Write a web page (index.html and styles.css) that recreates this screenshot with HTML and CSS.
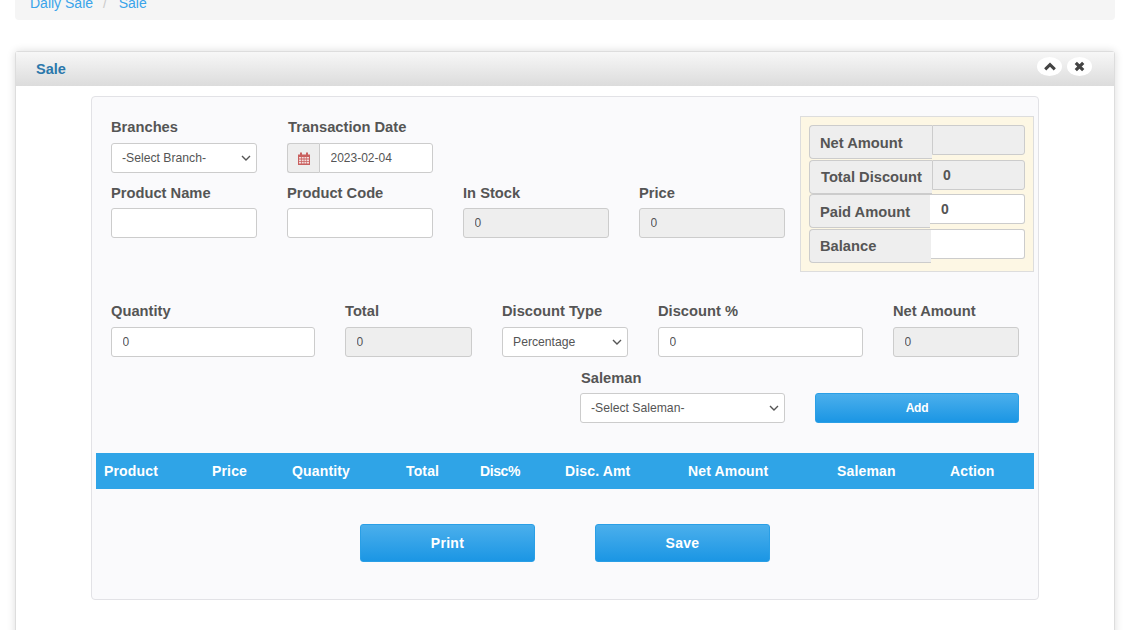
FILE: index.html
```html
<!DOCTYPE html>
<html lang="en">
<head>
    <meta charset="UTF-8">
    <meta name="viewport" content="width=device-width, initial-scale=1.0">
    <title>Sale</title>
    <link rel="stylesheet" href="styles.css">
</head>
<body>
    <div class="breadcrumb">
        <a href="#">Daily Sale</a>
        <span class="crumb-sep">/</span>
        <a href="#">Sale</a>
    </div>

    <div class="panel">
        <div class="panel-head">
            <h3>Sale</h3>
            <div class="panel-tools">
                <span class="tool-btn">
                    <svg width="12" height="9" viewBox="0 0 12 9"><path d="M1.2 7.4 6 2.6l4.8 4.8" fill="none" stroke="#444" stroke-width="3"/></svg>
                </span>
                <span class="tool-btn">
                    <svg width="11" height="11" viewBox="0 0 11 11"><path d="M1.8 1.8l7.4 7.4M9.2 1.8 1.8 9.2" fill="none" stroke="#444" stroke-width="3.2"/></svg>
                </span>
            </div>
        </div>

        <div class="panel-body">
            <div class="sale-box">
                <div class="top-block">
                    <div class="top-fields">
                        <div class="row row-first">
                            <div class="field w146">
                                <label>Branches</label>
                                <select class="control"><option>-Select Branch-</option></select>
                            </div>
                            <div class="field w146">
                                <label class="label-date">Transaction Date</label>
                                <div class="date-group">
                                    <span class="date-addon">
                                        <svg width="12" height="13" viewBox="0 0 12 13">
                                            <path d="M0 2.5h12V13H0z" fill="#c9605f"/>
                                            <path d="M2 0.5h2v3H2zM8 0.5h2v3H8z" fill="#c9605f"/>
                                            <path d="M1 5h2v1.6H1zM3.7 5h2v1.6h-2zM6.4 5h2v1.6h-2zM9 5h2v1.6H9zM1 7.4h2V9H1zM3.7 7.4h2V9h-2zM6.4 7.4h2V9h-2zM9 7.4h2V9H9zM1 9.8h2v1.6H1zM3.7 9.8h2v1.6h-2zM6.4 9.8h2v1.6h-2zM9 9.8h2v1.6H9z" fill="#f3dddd"/>
                                        </svg>
                                    </span>
                                    <input class="control date-input" type="text" value="2023-02-04">
                                </div>
                            </div>
                        </div>
                        <div class="row">
                            <div class="field w146">
                                <label>Product Name</label>
                                <input class="control" type="text">
                            </div>
                            <div class="field w146">
                                <label>Product Code</label>
                                <input class="control" type="text">
                            </div>
                            <div class="field w146">
                                <label>In Stock</label>
                                <input class="control" type="text" value="0" readonly>
                            </div>
                            <div class="field w146">
                                <label>Price</label>
                                <input class="control" type="text" value="0" readonly>
                            </div>
                        </div>
                    </div>

                    <div class="amount-box">
                        <div class="amount-row">
                            <span class="amount-label w123">Net Amount</span>
                            <input class="amount-input" type="text" readonly>
                        </div>
                        <div class="amount-row">
                            <span class="amount-label w123 label-discount">Total Discount</span>
                            <input class="amount-input" type="text" value="0" readonly>
                        </div>
                        <div class="amount-row">
                            <span class="amount-label w121">Paid Amount</span>
                            <input class="amount-input" type="text" value="0">
                        </div>
                        <div class="amount-row">
                            <span class="amount-label w122">Balance</span>
                            <input class="amount-input" type="text">
                        </div>
                    </div>
                </div>

                <div class="row row-qty">
                    <div class="field w204">
                        <label>Quantity</label>
                        <input class="control" type="text" value="0">
                    </div>
                    <div class="field w127">
                        <label>Total</label>
                        <input class="control" type="text" value="0" readonly>
                    </div>
                    <div class="field w126">
                        <label>Discount Type</label>
                        <select class="control"><option>Percentage</option></select>
                    </div>
                    <div class="field w205">
                        <label>Discount %</label>
                        <input class="control" type="text" value="0">
                    </div>
                    <div class="field w126">
                        <label>Net Amount</label>
                        <input class="control" type="text" value="0" readonly>
                    </div>
                </div>

                <div class="row row-add">
                    <div class="field w205">
                        <label class="label-saleman">Saleman</label>
                        <select class="control"><option>-Select Saleman-</option></select>
                    </div>
                    <button class="btn btn-add" type="button">Add</button>
                </div>

                <table class="items">
                    <thead>
                        <tr>
                            <th class="c-product">Product</th>
                            <th class="c-price">Price</th>
                            <th class="c-qty">Quantity</th>
                            <th class="c-total">Total</th>
                            <th class="c-disc">Disc%</th>
                            <th class="c-amt">Disc. Amt</th>
                            <th class="c-net">Net Amount</th>
                            <th class="c-sale">Saleman</th>
                            <th class="c-action">Action</th>
                        </tr>
                    </thead>
                </table>

                <div class="actions">
                    <button class="btn btn-large" type="button">Print</button>
                    <button class="btn btn-large" type="button">Save</button>
                </div>
            </div>
        </div>
    </div>
</body>
</html>
```

FILE: styles.css
```css
html, body {
    height: 630px;
    overflow: hidden;
}
body {
    font-family: "Liberation Sans", Arial, sans-serif;
    font-size: 14px;
    margin: 0;
    padding: 0 11px 0 15px;
    background-color: #fff;
    color: #555;
}
* {
    box-sizing: border-box;
}

.breadcrumb {
    height: 40px;
    margin-top: -20px;
    padding: 13px 15px 0;
    line-height: 20px;
    background-color: #f5f5f5;
    border-radius: 4px;
}
.breadcrumb a {
    color: #3aa4ea;
    text-decoration: none;
}
.crumb-sep {
    color: #ccc;
    padding: 0 8px 0 6px;
}

.panel {
    margin-top: 31px;
    height: 590px;
    background-color: #fff;
    border: 1px solid #ddd;
    border-radius: 3px;
    box-shadow: 0 0 8px rgba(0, 0, 0, 0.14);
}
.panel-head {
    display: flex;
    justify-content: space-between;
    height: 34px;
    padding: 5px 22px 0 20px;
    background: linear-gradient(to bottom, #f7f7f7, #dcdcdc);
}
.panel-head h3 {
    margin: 0;
    font-size: 14.5px;
    line-height: 24px;
    font-weight: bold;
    color: #2b78ab;
}
.panel-tools {
    display: flex;
    gap: 5px;
}
.tool-btn {
    display: flex;
    align-items: center;
    justify-content: center;
    width: 25px;
    height: 19px;
    background-color: #fff;
    border-radius: 50%;
}
.panel-body {
    padding: 10px 75px 0;
}

.sale-box {
    height: 504px;
    padding: 19px 19px 0;
    background-color: #fafafc;
    border: 1px solid #e2e2e6;
    border-radius: 4px;
}

.top-block {
    display: flex;
    justify-content: space-between;
    height: 156px;
    margin-right: -15px;
}
.row {
    display: flex;
    gap: 30px;
}
.row-first {
    padding-top: 1px;
    margin-bottom: 10px;
}
.row-qty {
    margin-top: 29px;
}
.row-add {
    justify-content: flex-end;
    align-items: flex-end;
    margin-top: 11px;
}

.field label {
    display: block;
    height: 20px;
    margin-bottom: 5px;
    line-height: 20px;
    font-size: 14.7px;
    font-weight: bold;
    color: #555;
}
.row-first .field label,
.row-qty .field label {
    margin-bottom: 6px;
}
.field .label-date,
.field .label-saleman {
    padding-left: 1px;
}
.w146 { width: 146px; }
.w204 { width: 204px; }
.w127 { width: 127px; }
.w126 { width: 126px; }
.w205 { width: 205px; }

.control {
    display: block;
    width: 100%;
    height: 30px;
    padding: 0 10.5px;
    font-family: inherit;
    font-size: 12px;
    color: #555;
    background-color: #fff;
    border: 1px solid #ccc;
    border-radius: 3px;
}
select.control {
    padding: 0 20px 0 10px;
    font-size: 12.2px;
    appearance: none;
    background-image: url("data:image/svg+xml,%3Csvg xmlns='http://www.w3.org/2000/svg' width='10' height='6' viewBox='0 0 10 6'%3E%3Cpath d='M1 1l4 4 4-4' fill='none' stroke='%23555' stroke-width='1.4'/%3E%3C/svg%3E");
    background-repeat: no-repeat;
    background-position: right 5px center;
}
.control[readonly] {
    background-color: #eee;
}

.date-group {
    display: flex;
}
.date-addon {
    display: flex;
    align-items: center;
    justify-content: center;
    flex: none;
    width: 32px;
    height: 30px;
    background-color: #eee;
    border: 1px solid #ccc;
    border-right: 0;
    border-radius: 3px 0 0 3px;
}
.date-input {
    border-radius: 0 3px 3px 0;
}

.amount-box {
    width: 234px;
    height: 156px;
    padding: 8px 8px 0;
    background-color: #fdf7e4;
    border: 1px solid #ddd;
}
.amount-row {
    display: flex;
    height: 34.5px;
}
.amount-label {
    flex: none;
    height: 34px;
    padding-left: 10px;
    line-height: 34px;
    font-size: 14.7px;
    font-weight: bold;
    color: #555;
    background-color: #eee;
    border: 1px solid #ccc;
    border-right: 0;
    border-radius: 4px 0 0 4px;
}
.amount-row:nth-child(even) .amount-label {
    line-height: 33px;
}
.label-discount { padding-left: 11px; }
.w123 { width: 123px; }
.w122 { width: 122px; }
.w121 { width: 121px; }
.amount-input {
    flex: 1;
    min-width: 0;
    height: 30px;
    padding: 0 10px 0 11px;
    font-family: inherit;
    font-size: 14px;
    font-weight: bold;
    color: #555;
    background-color: #fff;
    border: 1px solid #ccc;
    border-left: 0;
    border-radius: 0 3px 3px 0;
}
.amount-input[readonly] {
    background-color: #eee;
    border-left: 1px solid #ccc;
    padding-left: 10px;
}

.btn {
    font-family: inherit;
    font-weight: bold;
    color: #fff;
    background: linear-gradient(to bottom, #4bafec, #1b96e4);
    border: 1px solid #2a9fe6;
    border-radius: 3px;
}
.btn-add {
    width: 204px;
    height: 30px;
    font-size: 12px;
    letter-spacing: -0.2px;
}
.btn-large {
    width: 175px;
    height: 38px;
    font-size: 14px;
    letter-spacing: 0.3px;
}

.items {
    width: 938px;
    margin: 30px 0 0 -15px;
    border-collapse: collapse;
    table-layout: fixed;
}
.items th {
    height: 36px;
    padding: 0 0 0 8px;
    text-align: left;
    font-size: 14px;
    font-weight: bold;
    color: #fff;
    letter-spacing: 0.15px;
    background-color: #2fa4e7;
}
.items th.c-disc {
    letter-spacing: -0.4px;
}
.c-product { width: 108px; }
.c-price { width: 80px; }
.c-qty { width: 114px; }
.c-total { width: 74px; }
.c-disc { width: 85px; }
.c-amt { width: 123px; }
.c-net { width: 149px; }
.c-sale { width: 113px; }
.c-action { width: 92px; }

.actions {
    display: flex;
    justify-content: center;
    gap: 60px;
    margin-top: 35px;
}
```
